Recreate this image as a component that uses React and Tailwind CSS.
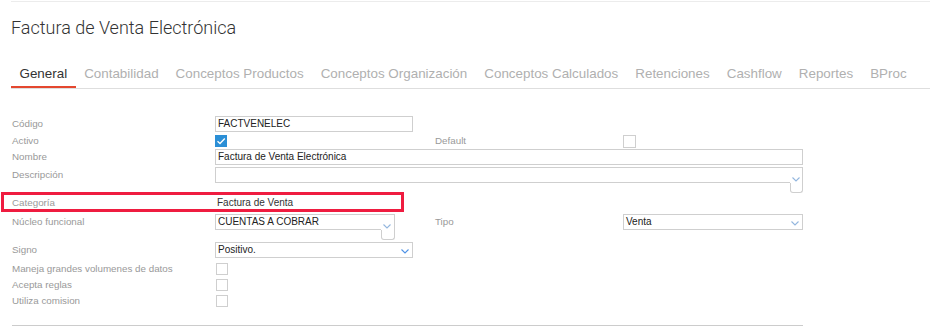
import React from "react";

const tabs = [
  "General",
  "Contabilidad",
  "Conceptos Productos",
  "Conceptos Organización",
  "Conceptos Calculados",
  "Retenciones",
  "Cashflow",
  "Reportes",
  "BProc",
];

function Chevron({ strong = false }) {
  return (
    <svg width="8" height="5" viewBox="0 0 8 5" fill="none">
      <polyline
        points="0.5,0.5 4,4 7.5,0.5"
        stroke={strong ? "#4f92e6" : "#93b6de"}
        strokeWidth="1.1"
      />
    </svg>
  );
}

function Label({ children, className = "" }) {
  return (
    <div className={`w-[203px] shrink-0 text-[9.8px] leading-[16px] text-[#999] ${className}`}>
      {children}
    </div>
  );
}

function Input({ value, width }) {
  return (
    <div
      className={`h-[16px] border border-[#cfcfcf] pl-[2px] text-[10px] leading-[14px] text-[#222] ${width}`}
    >
      {value}
    </div>
  );
}

function Checkbox({ checked = false, className = "" }) {
  if (checked) {
    return (
      <div className={`flex h-[12px] w-[12px] items-center justify-center bg-[#2b8fd6] ${className}`}>
        <svg width="10" height="10" viewBox="0 0 10 10" fill="none">
          <polyline points="1.5,5.2 4,7.5 8.8,2.5" stroke="#fff" strokeWidth="1.3" />
        </svg>
      </div>
    );
  }
  return <div className={`h-[12px] w-[12px] border border-[#cfcfcf] ${className}`} />;
}

// campo con la esquina de "redimensionar" que baja más que el resto
function TallSelect({ value, mainWidth, sideWidth }) {
  return (
    <div className="flex items-start">
      <div
        className={`h-[16px] border-y border-l border-[#cfcfcf] pl-[2px] text-[10px] leading-[14px] text-[#222] ${mainWidth}`}
      >
        {value}
      </div>
      <div className={`flex flex-col ${sideWidth}`}>
        <div className="flex h-[16px] items-end justify-start border-t border-r border-[#cfcfcf] pb-[1px] pl-[2px]">
          <Chevron />
        </div>
        <div className="h-[10px] rounded-b-[3px] border-x border-b border-[#cfcfcf]" />
      </div>
    </div>
  );
}

function Select({ value, width, strong = false }) {
  return (
    <div
      className={`flex h-[16px] items-center justify-between border border-[#cfcfcf] pl-[2px] pr-[3px] text-[10px] leading-[14px] text-[#222] ${width}`}
    >
      <span>{value}</span>
      <span className="pt-[2px]">
        <Chevron strong={strong} />
      </span>
    </div>
  );
}

export default function App() {
  return (
    <div className="h-[326px] w-[930px] overflow-hidden bg-white font-['Liberation_Sans',Arial,sans-serif]">
      <div className="ml-[11px] mt-[1px] h-px bg-[#ececec]" />

      <h1 className="ml-[11px] mt-[14px] font-['Roboto',sans-serif] text-[18px] font-light leading-[24px] text-[#333]">
        Factura de Venta Electrónica
      </h1>

      <div className="ml-[11px] mt-[26px] flex border-b border-[#dedede]">
        {tabs.map((tab, i) => (
          <div
            key={tab}
            className={`px-[8.5px] pb-[4px] text-[13.4px] leading-[16px] ${
              i === 0
                ? "border-b-2 border-[#e4472f] text-[#333]"
                : "border-b-2 border-transparent text-[#b0b0b0]"
            }`}
          >
            {tab}
          </div>
        ))}
      </div>

      <div className="ml-[12px] mt-[27px] flex flex-col">
        <div className="flex h-[16px] items-center">
          <Label>Código</Label>
          <Input value="FACTVENELEC" width="w-[198px]" />
        </div>

        <div className="mt-[1px] flex h-[16px] items-center">
          <Label>Activo</Label>
          <div className="w-[220px]">
            <Checkbox checked />
          </div>
          <div className="w-[188px] text-[9.8px] leading-[16px] text-[#999]">Default</div>
          <Checkbox className="h-[13px] w-[13px]" />
        </div>

        <div className="flex h-[16px] items-center">
          <Label>Nombre</Label>
          <Input value="Factura de Venta Electrónica" width="w-[588px]" />
        </div>

        <div className="mt-[2px] flex items-start">
          <Label>Descripción</Label>
          <TallSelect value="" mainWidth="w-[575px]" sideWidth="w-[13px]" />
        </div>

        <div className="-ml-[11px] -mt-[1px] flex h-[20px] w-[403px] items-center border-[3px] border-[#ef1c40] pl-[8px] pt-[1px]">
          <div className="w-[205px] text-[9.8px] leading-[14px] text-[#999]">Categoría</div>
          <div className="text-[10px] leading-[14px] text-[#333]">Factura de Venta</div>
        </div>

        <div className="mt-[2px] flex items-start">
          <Label>Núcleo funcional</Label>
          <div className="w-[220px]">
            <TallSelect value="CUENTAS A COBRAR" mainWidth="w-[166px]" sideWidth="w-[14px]" />
          </div>
          <div className="w-[188px] text-[9.8px] leading-[16px] text-[#999]">Tipo</div>
          <Select value="Venta" width="w-[180px]" />
        </div>

        <div className="mt-[2px] flex h-[16px] items-center">
          <Label>Signo</Label>
          <Select value="Positivo." width="w-[198px]" strong />
        </div>

        <div className="mt-[3px] flex h-[16px] items-center">
          <Label>Maneja grandes volumenes de datos</Label>
          <Checkbox className="ml-[1px]" />
        </div>

        <div className="flex h-[16px] items-center">
          <Label>Acepta reglas</Label>
          <Checkbox className="ml-[1px]" />
        </div>

        <div className="flex h-[16px] items-center">
          <Label>Utiliza comision</Label>
          <Checkbox className="ml-[1px]" />
        </div>

        <div className="mt-[16px] h-px w-[791px] bg-[#cccccc]" />
      </div>
    </div>
  );
}
